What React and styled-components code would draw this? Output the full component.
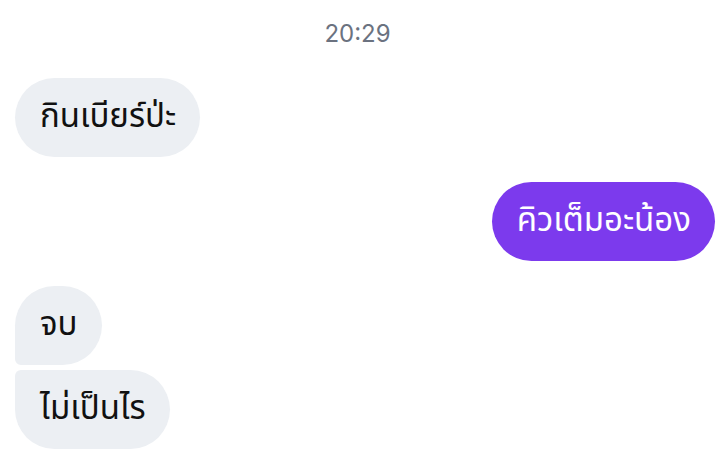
import React from "react";
import styled, { createGlobalStyle } from "styled-components";

const Global = createGlobalStyle`
  html, body { margin: 0; padding: 0; background: #ffffff; }
  body { font-family: "Noto Sans Thai", "Noto Sans", "DejaVu Sans", sans-serif; }
`;

const Thread = styled.div`
  display: flex;
  flex-direction: column;
  padding: 18px 2px 0 15px;
  width: 717px;
  box-sizing: border-box;
`;

const Time = styled.div`
  align-self: center;
  margin-left: -15px;
  font-family: Inter, "Noto Sans", sans-serif;
  font-size: 24px;
  line-height: 32px;
  color: #6b7280;
  margin-bottom: 28px;
`;

const Group = styled.div`
  display: flex;
  flex-direction: column;
  align-items: ${(p) => (p.$mine ? "flex-end" : "flex-start")};
  gap: 5px;
  margin-bottom: 25px;
`;

const Bubble = styled.div`
  height: 79px;
  box-sizing: border-box;
  padding: 0 24px 2px 25px;
  display: flex;
  align-items: center;
  font-size: 33px;
  background: ${(p) => (p.$mine ? "#7c3aed" : "#eceff3")};
  color: ${(p) => (p.$mine ? "#ffffff" : "#111111")};
  border-radius: ${(p) => p.$radius || "40px"};
  white-space: nowrap;
`;

export default function App() {
  return (
    <>
      <Global />
      <Thread>
        <Time>20:29</Time>
        <Group>
          <Bubble>กินเบียร์ป่ะ</Bubble>
        </Group>
        <Group $mine>
          <Bubble $mine>คิวเต็มอะน้อง</Bubble>
        </Group>
        <Group>
          <Bubble $radius="40px 40px 40px 6px">จบ</Bubble>
          <Bubble $radius="6px 40px 40px 40px">ไม่เป็นไร</Bubble>
        </Group>
      </Thread>
    </>
  );
}
